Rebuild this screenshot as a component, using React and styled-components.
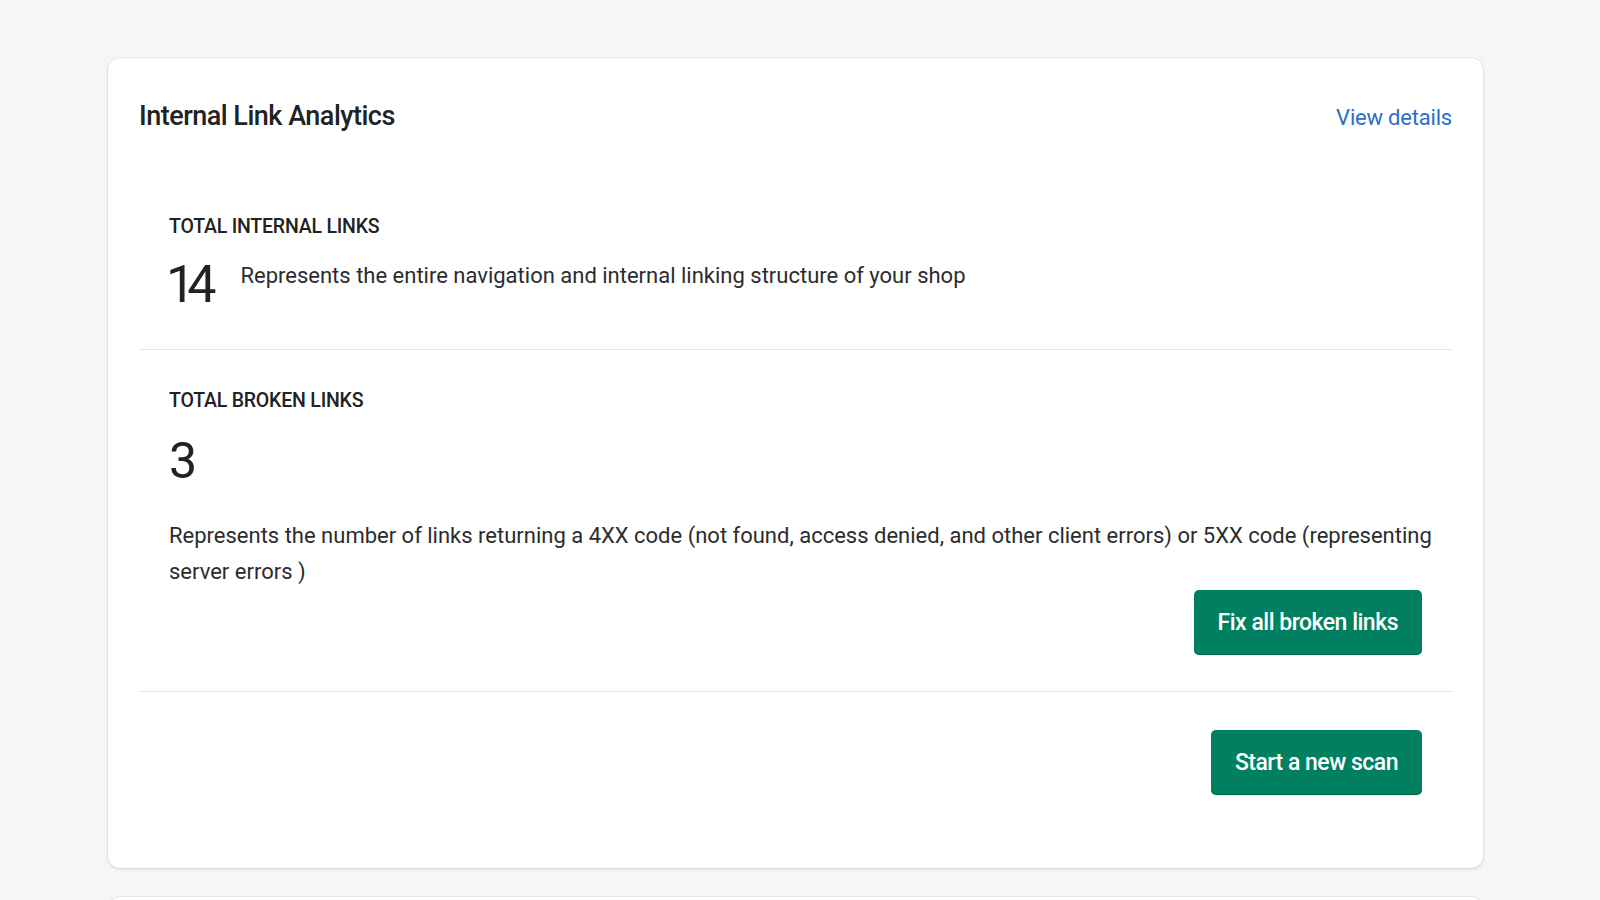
import React from "react";
import styled, { createGlobalStyle } from "styled-components";

const Global = createGlobalStyle`
  html, body { margin: 0; padding: 0; background: #f6f6f7; }
  body { font-family: Roboto, "Noto Sans", sans-serif; color: #202223; -webkit-font-smoothing: antialiased; }
  * { box-sizing: border-box; }
`;

const Page = styled.div`
  padding: 58px 117px 0 108px;
  display: flex;
  flex-direction: column;
  gap: 29px;
  height: 900px;
  overflow: hidden;
`;

const Card = styled.section`
  background: #ffffff;
  border-radius: 12px;
  box-shadow: 0 0 0 1px rgba(63, 63, 68, 0.04), 0 1px 3px rgba(63, 63, 68, 0.18);
  padding: 41px 31px 73px 31px;
  flex-shrink: 0;
  min-height: ${(p) => p.$minHeight || "auto"};
`;

const Header = styled.div`
  display: flex;
  justify-content: space-between;
  align-items: baseline;
  margin-bottom: 40px;
`;

const Title = styled.h2`
  margin: 0;
  font-size: 27px;
  line-height: 34px;
  font-weight: 500;
  letter-spacing: -0.5px;
`;

const Link = styled.a`
  font-size: 22px;
  line-height: 34px;
  letter-spacing: -0.2px;
  color: #2c6ecb;
  text-decoration: none;
  cursor: pointer;
`;

const Section = styled.div`
  padding: ${(p) => p.$pad};
  border-top: ${(p) => (p.$divider ? "1px solid #e1e3e5" : "none")};
  display: flex;
  flex-direction: column;
`;

const Label = styled.div`
  font-size: 19.5px;
  line-height: 24px;
  font-weight: 500;
  letter-spacing: -0.2px;
  text-transform: uppercase;
  color: #202223;
`;

const StatRow = styled.div`
  display: flex;
  align-items: flex-start;
  gap: 32px;
  margin-top: ${(p) => p.$mt || "15px"};
`;

const Number = styled.div`
  font-size: ${(p) => p.$size || "52px"};
  line-height: ${(p) => p.$lh || "62px"};
  letter-spacing: ${(p) => p.$ls || "0"};
  margin-left: ${(p) => p.$ml || "0"};
  font-weight: 400;
  color: #202223;
`;

const InlineText = styled.p`
  margin: 5px 0 0 0;
  font-size: 22px;
  line-height: 34px;
  color: #2b2c2d;
`;

const Paragraph = styled.p`
  margin: 27px 0 0 0;
  font-size: 22px;
  line-height: 36px;
  color: #2b2c2d;
`;

const ButtonRow = styled.div`
  display: flex;
  justify-content: flex-end;
  padding-right: 30px;
`;

const Button = styled.button`
  height: 65px;
  padding: 0 24px;
  background: #008060;
  color: #ffffff;
  border: none;
  border-radius: 5px;
  font-family: Roboto, "Noto Sans", sans-serif;
  font-size: 23px;
  letter-spacing: -0.5px;
  font-weight: 500;
  box-shadow: inset 0 -1px 0 rgba(0, 0, 0, 0.2), 0 1px 0 rgba(0, 0, 0, 0.05);
  cursor: pointer;
`;

export default function App() {
  return (
    <>
      <Global />
      <Page>
        <Card>
          <Header>
            <Title>Internal Link Analytics</Title>
            <Link>View details</Link>
          </Header>

          <Section $pad="40px 0 33px 30px">
            <Label>Total internal links</Label>
            <StatRow>
              <Number $ls="-8px" $ml="-3px">14</Number>
              <InlineText>
                Represents the entire navigation and internal linking structure of your shop
              </InlineText>
            </StatRow>
          </Section>

          <Section $divider $pad="39px 0 36px 30px">
            <Label>Total broken links</Label>
            <StatRow $mt="18px">
              <Number $size="50px" $lh="60px">3</Number>
            </StatRow>
            <Paragraph>
              Represents the number of links returning a 4XX code (not found, access denied, and
              other client errors) or 5XX code (representing server errors )
            </Paragraph>
            <ButtonRow>
              <Button>Fix all broken links</Button>
            </ButtonRow>
          </Section>

          <Section $divider $pad="38px 0 0 30px">
            <ButtonRow>
              <Button>Start a new scan</Button>
            </ButtonRow>
          </Section>
        </Card>
        <Card $minHeight="200px" />
      </Page>
    </>
  );
}
